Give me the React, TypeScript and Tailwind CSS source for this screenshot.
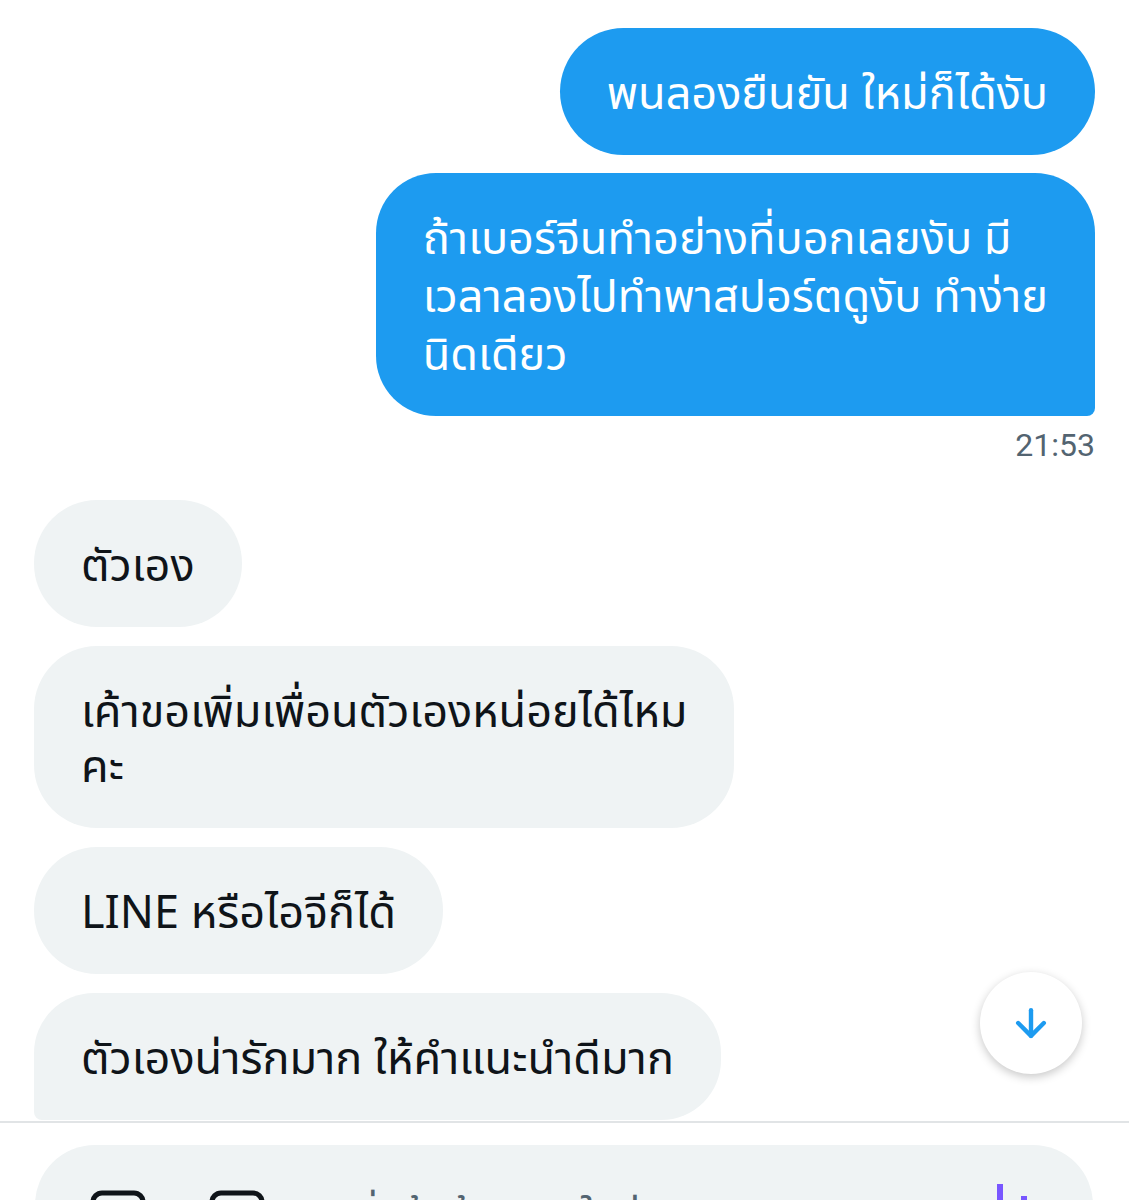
import { ArrowDown } from "lucide-react";

const thai = "font-['Noto_Sans_Thai','Noto_Sans','Roboto',sans-serif]";

function Sent({ lines, last }: { lines: string[]; last?: boolean }) {
  return (
    <div
      className={`self-end bg-[#1d9bf0] text-white text-[45px] leading-[58px] pt-[38px] pb-[31px] px-[47px] ${
        last ? "rounded-[60px] rounded-br-[8px] pl-[47px] pr-[47px]" : "rounded-full"
      }`}
    >
      {lines.map((l, i) => (
        <div key={i} className="whitespace-nowrap">
          {l}
        </div>
      ))}
    </div>
  );
}

function Received({ lines, last }: { lines: string[]; last?: boolean }) {
  return (
    <div
      className={`self-start bg-[#eff3f4] text-[#0f1419] text-[45px] leading-[55px] pt-[40px] pb-[32px] px-[47px] ${
        last ? "rounded-[60px] rounded-bl-[8px]" : "rounded-[63px]"
      }`}
    >
      {lines.map((l, i) => (
        <div key={i} className="whitespace-nowrap">
          {l}
        </div>
      ))}
    </div>
  );
}

export default function App() {
  return (
    <div className={`w-[1129px] h-[1200px] overflow-hidden bg-white flex flex-col ${thai}`}>
      {/* Conversation */}
      <div className="relative h-[1121px] shrink-0 overflow-hidden px-[34px] pt-[28px] flex flex-col">
        <div className="flex flex-col gap-[18px]">
          <Sent lines={["พนลองยืนยัน ใหม่ก็ได้งับ"]} />
          <Sent
            last
            lines={[
              "ถ้าเบอร์จีนทำอย่างที่บอกเลยงับ มี",
              "เวลาลองไปทำพาสปอร์ตดูงับ ทำง่าย",
              "นิดเดียว",
            ]}
          />
        </div>
        <div className="self-end mt-[9px] text-[32px] leading-[40px] text-[#536471] font-['Roboto',sans-serif]">
          21:53
        </div>

        <div className="mt-[35px] flex flex-col gap-[19px]">
          <Received lines={["ตัวเอง"]} />
          <Received lines={["เค้าขอเพิ่มเพื่อนตัวเองหน่อยได้ไหม", "คะ"]} />
          <Received lines={["LINE หรือไอจีก็ได้"]} />
          <Received last lines={["ตัวเองน่ารักมาก ให้คำแนะนำดีมาก"]} />
        </div>

        {/* scroll to bottom */}
        <button className="absolute right-[47px] bottom-[47px] w-[102px] h-[102px] rounded-full bg-white shadow-[0_3px_10px_rgba(0,0,0,0.22)] flex items-center justify-center">
          <ArrowDown className="w-[44px] h-[44px] text-[#1d9bf0]" strokeWidth={2.4} />
        </button>
      </div>

      {/* Composer */}
      <div className="border-t-2 border-[#e1e4e6] pt-[22px] px-[35px] pr-[36px]">
        <div className="h-[120px] rounded-[62px] bg-[#eff3f4] flex items-start pt-[45px] pl-[55px] pr-[60px]">
          <svg width="56" height="56" viewBox="0 0 56 56" className="shrink-0">
            <rect x="3" y="3" width="50" height="50" rx="9" fill="none" stroke="#0f1419" strokeWidth="5" />
          </svg>
          <svg width="56" height="56" viewBox="0 0 56 56" className="shrink-0 ml-[63px]">
            <rect x="3" y="3" width="50" height="50" rx="9" fill="none" stroke="#0f1419" strokeWidth="5" />
          </svg>
          <div className="ml-[80px] mt-[-2px] text-[40px] leading-[56px] text-[#536471] whitespace-nowrap">
            เริ่มต้นข้อความใหม่
          </div>
          <svg width="40" height="40" viewBox="0 0 40 40" className="ml-auto mt-[-6px] shrink-0">
            <rect x="4" y="0" width="6" height="40" fill="#7856ff" />
            <rect x="28" y="12" width="6" height="28" fill="#7856ff" />
          </svg>
        </div>
      </div>
    </div>
  );
}
